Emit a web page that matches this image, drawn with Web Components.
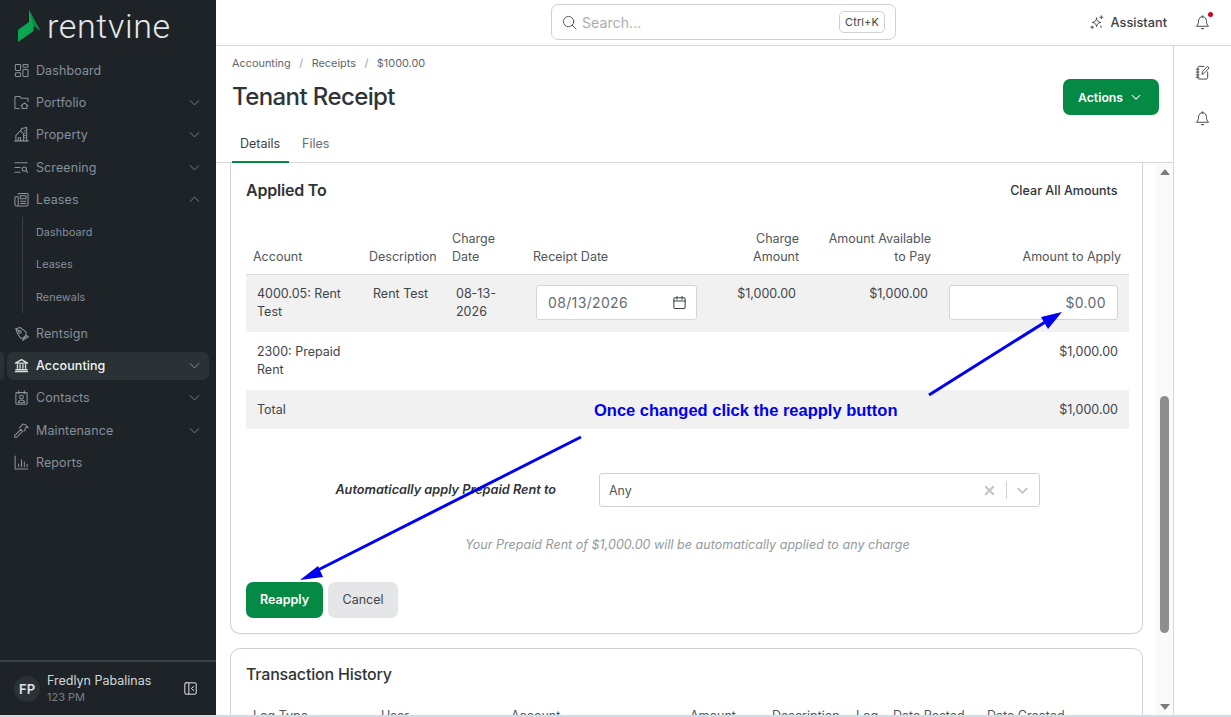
<!DOCTYPE html>
<html><head><meta charset="utf-8">
<style>
html,body{margin:0;padding:0;height:717px;overflow:hidden;background:#fff;font-family:Inter,"Liberation Sans",sans-serif}
</style></head><body>
<app-shell></app-shell>
<script>
const ICONS={
dash:'<rect x="1.5" y="1.5" width="5.500" height="6.500" rx="1"/><rect x="9.500" y="1.500" width="5.500" height="3" rx="1"/><rect x="1.500" y="10.500" width="5.500" height="4" rx="1"/><rect x="9.500" y="7" width="5.500" height="7.500" rx="1"/>',
folder:'<path d="M5.500 14.500H2a1 1 0 0 1-1-1V2.500a1 1 0 0 1 1-1h4l2 2h6a1 1 0 0 1 1 1v2.500"/><path d="M7.500 11.500l3.700-3 3.800 3M8.700 10.800v3.700h5v-3.700"/>',
prop:'<path d="M.8 14.800h14.400M2 14.800V9l5-5 3.200 3.200v7.600M4.500 14.800v-3.300h2.500v3.300"/><path d="M7 4l1.200-2.500 5.300-1v14.300M11 4h1M11 6.500h1M11 9h1M11 11.500h1"/>',
screen:'<path d="M1 3h13M1 8h5.500M1 13h5.500"/><circle cx="11" cy="9.700" r="2.300"/><path d="M12.700 11.400l1.900 1.900"/>',
lease:'<path d="M4.500 2.500a1 1 0 0 1 1-1h8.500a1 1 0 0 1 1 1v11a1.500 1.500 0 0 1-1.500 1.500H3a2 2 0 0 1-2-2V6a1 1 0 0 1 1-1h2.500M4.500 5v8.500A1.500 1.500 0 0 1 3 15"/><rect x="6.800" y="4" width="6" height="3.300"/><path d="M7 9.800h5.800M7 12.300h5.800"/>',
pen:'<path d="M3.500 7.500L2 3l4.500-1.500 6.500 5-.5 3.500-2.500 2.500-3 .5z"/><circle cx="6.300" cy="6.300" r="1.400"/><path d="M2 3l3.300 2.300M9 15.200l1-1.800 3.600-3.200 1.800 1.300z"/>',
bank:'<path d="M1.500 5.500L8 1.800l6.500 3.700zM1.500 14.500h13M2 12.500h12M3.700 7.200v3.800M6.500 7.200v3.800M9.500 7.200v3.800M12.300 7.200v3.800" stroke-width="1.400"/>',
contact:'<rect x="2" y="2.800" width="12" height="12.400" rx=".8"/><path d="M5 .8v3.200M11 .8v3.200"/><circle cx="8" cy="7.500" r="2"/><path d="M4.500 13.500c.3-1.900 1.600-2.800 3.500-2.800s3.200.9 3.500 2.800z"/>',
hammer:'<path d="M.8 13.500L7.300 6.800 9.300 8.800 2.800 15.200a1.300 1.300 0 0 1-2-1.700z"/><path d="M5.800 5.300L9.800 1c2 .3 4 1.500 5.400 4l-2-.6-1.500 1.500.5 1.500-1.500 1.300"/>',
chart:'<path d="M1.200 1v14h13.600M5 12.500V9.500M8 12.500V5M11 12.500V7.500M14 12.500v-2.500"/>',
down:'<path d="M3.500 6l4.500 4.500L12.500 6"/>',
up:'<path d="M3.500 10L8 5.500 12.500 10"/>',
collapse:'<rect x="1" y="1" width="14" height="14" rx="1.300"/><path d="M6 1v14M12 5.500L9 8l3 2.500"/>',
search:'<circle cx="7" cy="7" r="5.500"/><path d="M11 11l4 4"/>',
spark:'<path d="M7.500 3.500C8 6.800 9 8 12.500 8.500 9 9 8 10.200 7.500 13.500 7 10.200 6 9 2.500 8.500 6 8 7 6.800 7.500 3.500z"/><path d="M13 .8v3.500M11.300 2.500h3.400M12.500 12.500v2"/><circle cx="2.300" cy="14" r="1.200"/>',
bell:'<path d="M8 1.800c-2.800 0-4.200 2-4.200 4.700 0 2.500-.8 4-2.300 5.500h13c-1.500-1.500-2.300-3-2.300-5.500 0-2.700-1.400-4.700-4.200-4.700z"/><path d="M8 .8v1M7.200 14.500h1.600" stroke-width="1.300"/>',
note:'<path d="M9.500 1.500H4.500a1.500 1.500 0 0 0-1.500 1.500v10.500a1.500 1.500 0 0 0 1.500 1.500h7.500a1.500 1.500 0 0 0 1.500-1.500V7.500"/><path d="M1.300 4.500h3M1.300 7.500h3M1.300 10.500h3M1.300 13h3"/><path d="M7.500 9.500l.5-2.500 5.200-5.500 1.800 1.700L9.800 8.800z"/>',
cal:'<rect x="2" y="3" width="12" height="11.500" rx="1.500"/><path d="M2 6.500h12M5.300 1.500v3M10.700 1.500v3"/>',
x:'<path d="M4 4l8 8M12 4l-8 8" stroke-width="2.200"/>',
};
class UiIcon extends HTMLElement{
  connectedCallback(){
    const s=this.attachShadow({mode:'open'});
    const sz=this.getAttribute('size')||16;
    s.innerHTML=`<style>:host{display:inline-flex;flex:none;width:${sz}px;height:${sz}px}svg{width:100%;height:100%;fill:none;stroke:currentColor;stroke-width:${this.getAttribute('sw')||1};stroke-linecap:round;stroke-linejoin:round}</style><svg viewBox="0 0 16 16">${ICONS[this.getAttribute('name')]||''}</svg>`;
  }
}
customElements.define('ui-icon',UiIcon);

class NavItem extends HTMLElement{
  connectedCallback(){
    const s=this.attachShadow({mode:'open'});
    const ch=this.getAttribute('chevron');
    s.innerHTML=`<style>
    :host{display:flex;align-items:center;height:28px;margin:0 7px 4.250px;padding:0 8px 0 7px;border-radius:7px;color:#85909e;font-size:12.500px;letter-spacing:.1px}
    :host([active]){background:#2a3235;color:#f2f4f5;font-weight:500;position:relative}
    :host([active])::before{content:"";position:absolute;left:-7px;top:0;bottom:0;width:4px;background:#2a3235;border-radius:0 3px 3px 0}
    .i{margin-right:7px}.l{flex:1}
    ui-icon{color:#8d949b}:host([active]) ui-icon{color:#dfe2e4}
    .c{color:#868e96;margin-right:-1px}:host([active]) .c{color:#9aa2a8}
    </style><ui-icon class="i" size="15" sw="1.100" name="${this.getAttribute('icon')}"></ui-icon><span class="l"><slot></slot></span>${ch?`<ui-icon class="c" size="15" sw=".9" name="${ch}"></ui-icon>`:''}`;
  }
}
customElements.define('nav-item',NavItem);

class NavSub extends HTMLElement{
  connectedCallback(){
    const s=this.attachShadow({mode:'open'});
    s.innerHTML=`<style>:host{display:block;margin:-1px 0 6px 22px;border-left:1px solid #3a4044;padding-left:13px;color:#85909e;font-size:10.750px;letter-spacing:.1px}
    ::slotted(div){height:32.300px;display:flex;align-items:center}</style><slot></slot>`;
  }
}
customElements.define('nav-sub',NavSub);

class SideBar extends HTMLElement{
  connectedCallback(){
    const s=this.attachShadow({mode:'open'});
    s.innerHTML=`<style>
    :host{display:flex;flex-direction:column;width:216px;flex:none;background:#1e2327;height:715px}
    .logo{height:45px;display:flex;align-items:flex-start;padding:10px 0 0 18px;gap:6px;color:#e6e8e9;font-family:Roboto,Lato,sans-serif;font-size:34px;font-weight:300;letter-spacing:.65px;box-sizing:border-box;flex:none}
    .logo svg{width:23px;height:32px;flex:none}
    .logo span{line-height:34px;margin-top:-1px}
    nav{flex:1;padding-top:11.300px;min-height:0}
    .user{height:55px;box-sizing:border-box;border-top:2px solid #3a3f42;display:flex;align-items:center;padding:0 19px 0 14px;flex:none}
    .av{width:26px;height:26px;border-radius:50%;background:#2a3235;color:#dfe3e5;font-size:13px;font-weight:600;display:flex;align-items:center;justify-content:center;margin-right:7px}
    .n{flex:1;font-size:12.500px;color:#d4d8da;line-height:16px;padding-top:1px}.n small{display:block;font-size:11px;color:#777f86}
    ui-icon{color:#e2e4e6}
    </style>
    <div class="logo"><svg viewBox="0 0 23 32"><path fill="#0aa651" d="M11 0L22 20.500 15.500 15.500V21L0 32V20L11 12z"/><path fill="#078c46" d="M11 0L15.500 15.500 22 20.500z"/></svg><span>rentvine</span></div>
    <nav><slot></slot></nav>
    <div class="user"><div class="av">FP</div><div class="n">Fredlyn Pabalinas<small>123 PM</small></div><ui-icon name="collapse" size="13" sw="1.200"></ui-icon></div>`;
  }
}
customElements.define('side-bar',SideBar);

class TopBar extends HTMLElement{
  connectedCallback(){
    const s=this.attachShadow({mode:'open'});
    s.innerHTML=`<style>
    :host{display:flex;align-items:center;height:46px;box-sizing:border-box;border-bottom:1px solid #d5d7d9;flex:none;padding:0 0 1px 335px}
    .search{width:345px;height:36px;box-sizing:border-box;border:1px solid #cfd2d5;border-radius:7px;display:flex;align-items:center;padding:0 10px;color:#a8aeb4;font-size:14px;gap:5px}
    .search ui-icon{color:#4b5157}.search span{flex:1;letter-spacing:.1px}
    kbd{font:11px Inter,sans-serif;letter-spacing:.1px;color:#3c4248;border:1px solid #cfd2d5;border-radius:5px;padding:3px 5px;line-height:14px}
    .right{margin-left:auto;display:flex;align-items:center;color:#3c4248;font-size:12.750px;padding-right:21px}
    .a{margin-right:28px;display:flex;align-items:center;gap:7px;font-weight:500}
    .b{position:relative;display:flex}.b i{position:absolute;right:-3px;top:-3px;width:5px;height:5px;border-radius:50%;background:#c90a14}
    </style>
    <div class="search"><ui-icon name="search" size="15"></ui-icon><span>Search...</span><kbd>Ctrl+K</kbd></div>
    <div class="right"><div class="a"><ui-icon name="spark" size="14"></ui-icon>Assistant</div><div class="b"><ui-icon name="bell" size="15"></ui-icon><i></i></div></div>`;
  }
}
customElements.define('top-bar',TopBar);

class PageHead extends HTMLElement{
  connectedCallback(){
    const s=this.attachShadow({mode:'open'});
    s.innerHTML=`<style>
    :host{display:block;flex:none;height:117px;box-sizing:border-box;border-bottom:1px solid #d5d7d9;padding:0 14px 0 16px;position:relative}
    .crumb{display:flex;font-size:10.900px;color:#5f666c;gap:8.500px;padding-top:10px;line-height:14px}
    .crumb i{font-style:normal;color:#9aa0a5}
    .row{display:flex;align-items:flex-start;justify-content:space-between}
    h1{margin:12px 0 0;font-size:24px;font-weight:500;letter-spacing:-.6px;color:#2f3438;line-height:30px}
    .btn{background:#058a45;color:#fff;font-weight:600;font-size:12.250px;border-radius:7px;height:36px;width:96px;box-sizing:border-box;padding-left:15px;display:flex;align-items:center;gap:6px;margin-top:9px}
    .tabs{display:flex;font-size:12.500px;color:#666c72;position:absolute;left:16px;bottom:-1px}
    .tabs div{height:38px;line-height:38px;box-sizing:border-box}
    .tabs .on{color:#3c4248;border-bottom:2px solid #058a45;width:57px;padding-left:8px;margin-right:13px}
    </style>
    <div class="crumb"><span>Accounting</span><i>/</i><span>Receipts</span><i>/</i><span>$1000.00</span></div>
    <div class="row"><h1>Tenant Receipt</h1><div class="btn">Actions <ui-icon name="down" size="14" sw="1.200"></ui-icon></div></div>
    <div class="tabs"><div class="on">Details</div><div>Files</div></div>`;
  }
}
customElements.define('page-head',PageHead);

class FauxScrollbar extends HTMLElement{
  connectedCallback(){
    const s=this.attachShadow({mode:'open'});
    s.innerHTML=`<style>
    :host{display:flex;flex-direction:column;align-items:center;width:17px;flex:none;background:#fafafa}
    .ar{height:17px;display:flex;align-items:center;justify-content:center;flex:none}
    .sp{flex:none;height:216px}
    .th{width:9px;height:237px;background:#8d8d8d;border-radius:5px;flex:none}
    .end{flex:1}
    svg{width:10px;height:6px;fill:#7a7a7a}
    </style>
    <div class="ar"><svg viewBox="0 0 10 6"><path d="M5 0l5 6H0z"/></svg></div><div class="sp"></div><div class="th"></div><div class="end"></div><div class="ar"><svg viewBox="0 0 10 6"><path d="M5 6L0 0h10z"/></svg></div>`;
  }
}
customElements.define('faux-scrollbar',FauxScrollbar);

class AppliedCard extends HTMLElement{
  connectedCallback(){
    const s=this.attachShadow({mode:'open'});
    s.innerHTML=`<style>
    :host{display:block;flex:none;box-sizing:border-box;height:471px;border:1px solid #d0d2d4;border-top:0;border-radius:0 0 10px 10px;padding:0 15px;box-shadow:0 1px 1px rgba(0,0,0,.04);color:#3f444a}
    .h{display:flex;justify-content:space-between;align-items:center;height:55px;padding:0 9.500px 0 0}
    h2{margin:-2px 0 0;font-size:16px;font-weight:600;letter-spacing:-.2px;color:#2f3438}
    .clr{font-size:12.500px;font-weight:500;color:#2f3438;letter-spacing:.02px}
    table{border-collapse:collapse;table-layout:fixed;width:883px;font-size:12.500px;line-height:18px}
    th{font-weight:400;color:#50565c;padding:0 7px 8px;text-align:left;vertical-align:bottom;height:56px;box-sizing:border-box;border-bottom:1px solid #d9dcde}
    td{padding:10px 11px;vertical-align:top;box-sizing:border-box}
    .r{text-align:right}
    th.r{padding-right:8px}
    .g td{background:#f1f1f1}
    tr.a td{height:58px}tr.b td{height:58px;padding-top:11px}tr.t td{height:39px;padding-top:11px}
    .f{box-sizing:border-box;height:35px;background:#fff;border:1px solid #d2d5da;border-radius:3px;font-size:14px;color:#666c72;display:flex;align-items:center;padding:1px 11px 0;letter-spacing:.35px}
    .f.d{justify-content:space-between;padding-right:9px}.f.m{justify-content:flex-end}.f ui-icon{color:#3c4248}
    .auto{display:flex;align-items:center;margin-top:44px;height:34px}
    .auto b{font-size:12.700px;font-style:italic;font-weight:600;text-align:right;color:#2f3438;padding:0 43px 2px 0;box-sizing:border-box;white-space:nowrap;width:353px}
    .sel{width:441px;height:34px;box-sizing:border-box;border:1px solid #cfd2d5;border-radius:3px;display:flex;align-items:center;padding:0 9px;font-size:12.500px;color:#50565c}
    .sel span{flex:1}.sel ui-icon{color:#c2c5c8}.sel i{width:1px;height:18px;background:#cfd2d5;margin:0 8px 0 9px}
    .note{text-align:center;font-size:12.500px;font-style:italic;color:#94999e;margin-top:29px;line-height:18px;padding-left:2px;letter-spacing:.03px}
    .btns{display:flex;gap:5px;margin-top:28px}
    .btn{height:36px;border-radius:7px;font-size:12.500px;display:flex;align-items:center;justify-content:center;padding-bottom:1px;box-sizing:border-box}
    .p{width:77px;background:#058a45;color:#fff;font-weight:600}.c{width:70px;background:#e4e6e7;color:#3f444a}
    </style>
    <div class="h"><h2>Applied To</h2><div class="clr">Clear All Amounts</div></div>
    <table><colgroup><col style="width:116px"><col style="width:83px"><col style="width:81px"><col style="width:183px"><col style="width:98px"><col style="width:132px"><col style="width:190px"></colgroup>
    <tr><th>Account</th><th>Description</th><th>Charge Date</th><th>Receipt Date</th><th class="r">Charge Amount</th><th class="r">Amount Available to Pay</th><th class="r">Amount to Apply</th></tr>
    <tr class="a g"><td>4000.05: Rent Test</td><td>Rent Test</td><td>08-13-2026</td><td style="padding:10px 12px 0 10px"><div class="f d">08/13/2026<ui-icon name="cal" size="15" sw="1.100"></ui-icon></div></td><td class="r">$1,000.00</td><td class="r">$1,000.00</td><td style="padding:10px 11px 0 10px"><div class="f m">$0.00</div></td></tr>
    <tr class="b"><td>2300: Prepaid Rent</td><td></td><td></td><td></td><td></td><td></td><td class="r">$1,000.00</td></tr>
    <tr class="t g"><td>Total</td><td></td><td></td><td></td><td></td><td></td><td class="r">$1,000.00</td></tr>
    </table>
    <div class="auto"><b>Automatically apply Prepaid Rent to</b><div class="sel"><span>Any</span><ui-icon name="x" size="15"></ui-icon><i></i><ui-icon name="down" size="15" sw="2"></ui-icon></div></div>
    <div class="note">Your Prepaid Rent of $1,000.00 will be automatically applied to any charge</div>
    <div class="btns"><div class="btn p">Reapply</div><div class="btn c">Cancel</div></div>`;
  }
}
customElements.define('applied-card',AppliedCard);

class HistoryCard extends HTMLElement{
  connectedCallback(){
    const s=this.attachShadow({mode:'open'});
    s.innerHTML=`<style>
    :host{display:block;box-sizing:border-box;height:120px;flex:none;margin-top:14px;border:1px solid #d0d2d4;border-radius:10px;padding:0 15px;color:#50565c}
    h2{margin:0;font-size:16px;font-weight:500;letter-spacing:-.2px;color:#2f3438;line-height:50px}
    .c{display:grid;grid-template-columns:128px 130px 179px 82px 84px 37px 94px 90px;font-size:12.500px;padding:9px 0 0 7px}
    </style><h2>Transaction History</h2>
    <div class="c"><span>Log Type</span><span>User</span><span>Account</span><span>Amount</span><span>Description</span><span>Log</span><span>Date Posted</span><span>Date Created</span></div>`;
  }
}
customElements.define('history-card',HistoryCard);

class RightRail extends HTMLElement{
  connectedCallback(){
    const s=this.attachShadow({mode:'open'});
    s.innerHTML=`<style>:host{display:flex;flex-direction:column;align-items:center;flex:none;width:58px;border-left:1px solid #d5d7d9;box-sizing:border-box;padding-top:19px;gap:31px;color:#3c4248}</style>
    <ui-icon name="note" size="15"></ui-icon><ui-icon name="bell" size="15"></ui-icon>`;
  }
}
customElements.define('right-rail',RightRail);

class TourNote extends HTMLElement{
  connectedCallback(){
    const s=this.attachShadow({mode:'open'});
    s.innerHTML=`<style>
    :host{position:absolute;left:0;top:0;width:1231px;height:717px;pointer-events:none;display:block}
    svg{position:absolute;left:0;top:0}
    div{position:absolute;left:594px;top:401px;font:bold 16.500px/18px "Liberation Sans",Arial,sans-serif;color:#0000f0;white-space:nowrap}
    </style>
    <svg width="1231" height="717" viewBox="0 0 1231 717"><g stroke="#0000f0" stroke-width="3" fill="#0000f0"><path d="M929 395L1050 319"/><path d="M581 437L312 573"/></g>
    <path fill="#0000f0" d="M1062 312L1048 329 1041 317z"/><path fill="#0000f0" d="M300 580L318 566 323 577z"/></svg>
    <div>Once changed click the reapply button</div>`;
  }
}
customElements.define('tour-note',TourNote);

class AppShell extends HTMLElement{
  connectedCallback(){
    const s=this.attachShadow({mode:'open'});
    s.innerHTML=`<style>
    :host{display:block;width:1231px;height:717px;position:relative;overflow:hidden;background:#fff;font-family:Inter,"Liberation Sans",sans-serif}
    .root{display:flex;height:715px}
    .strip{height:2px;background:#cfdde8}
    .col{flex:1;display:flex;flex-direction:column;min-width:0}
    .body{flex:1;display:flex;min-height:0}
    .main{flex:1;display:flex;flex-direction:column;min-width:0}
    .scroll{flex:1;display:flex;min-height:0;overflow:hidden}
    .content{flex:1;padding:0 13px 0 14px;display:flex;flex-direction:column;overflow:hidden;min-width:0}
    </style>
    <div class="root">
      <side-bar>
        <nav-item icon="dash">Dashboard</nav-item>
        <nav-item icon="folder" chevron="down">Portfolio</nav-item>
        <nav-item icon="prop" chevron="down">Property</nav-item>
        <nav-item icon="screen" chevron="down">Screening</nav-item>
        <nav-item icon="lease" chevron="up">Leases</nav-item>
        <nav-sub><div>Dashboard</div><div>Leases</div><div>Renewals</div></nav-sub>
        <nav-item icon="pen">Rentsign</nav-item>
        <nav-item icon="bank" chevron="down" active>Accounting</nav-item>
        <nav-item icon="contact" chevron="down">Contacts</nav-item>
        <nav-item icon="hammer" chevron="down">Maintenance</nav-item>
        <nav-item icon="chart">Reports</nav-item>
      </side-bar>
      <div class="col">
        <top-bar></top-bar>
        <div class="body">
          <div class="main">
            <page-head></page-head>
            <div class="scroll">
              <div class="content"><applied-card></applied-card><history-card></history-card></div>
              <faux-scrollbar></faux-scrollbar>
            </div>
          </div>
          <right-rail></right-rail>
        </div>
      </div>
    </div>
    <div class="strip"></div>
    <tour-note></tour-note>`;
  }
}
customElements.define('app-shell',AppShell);
</script>
</body></html>
